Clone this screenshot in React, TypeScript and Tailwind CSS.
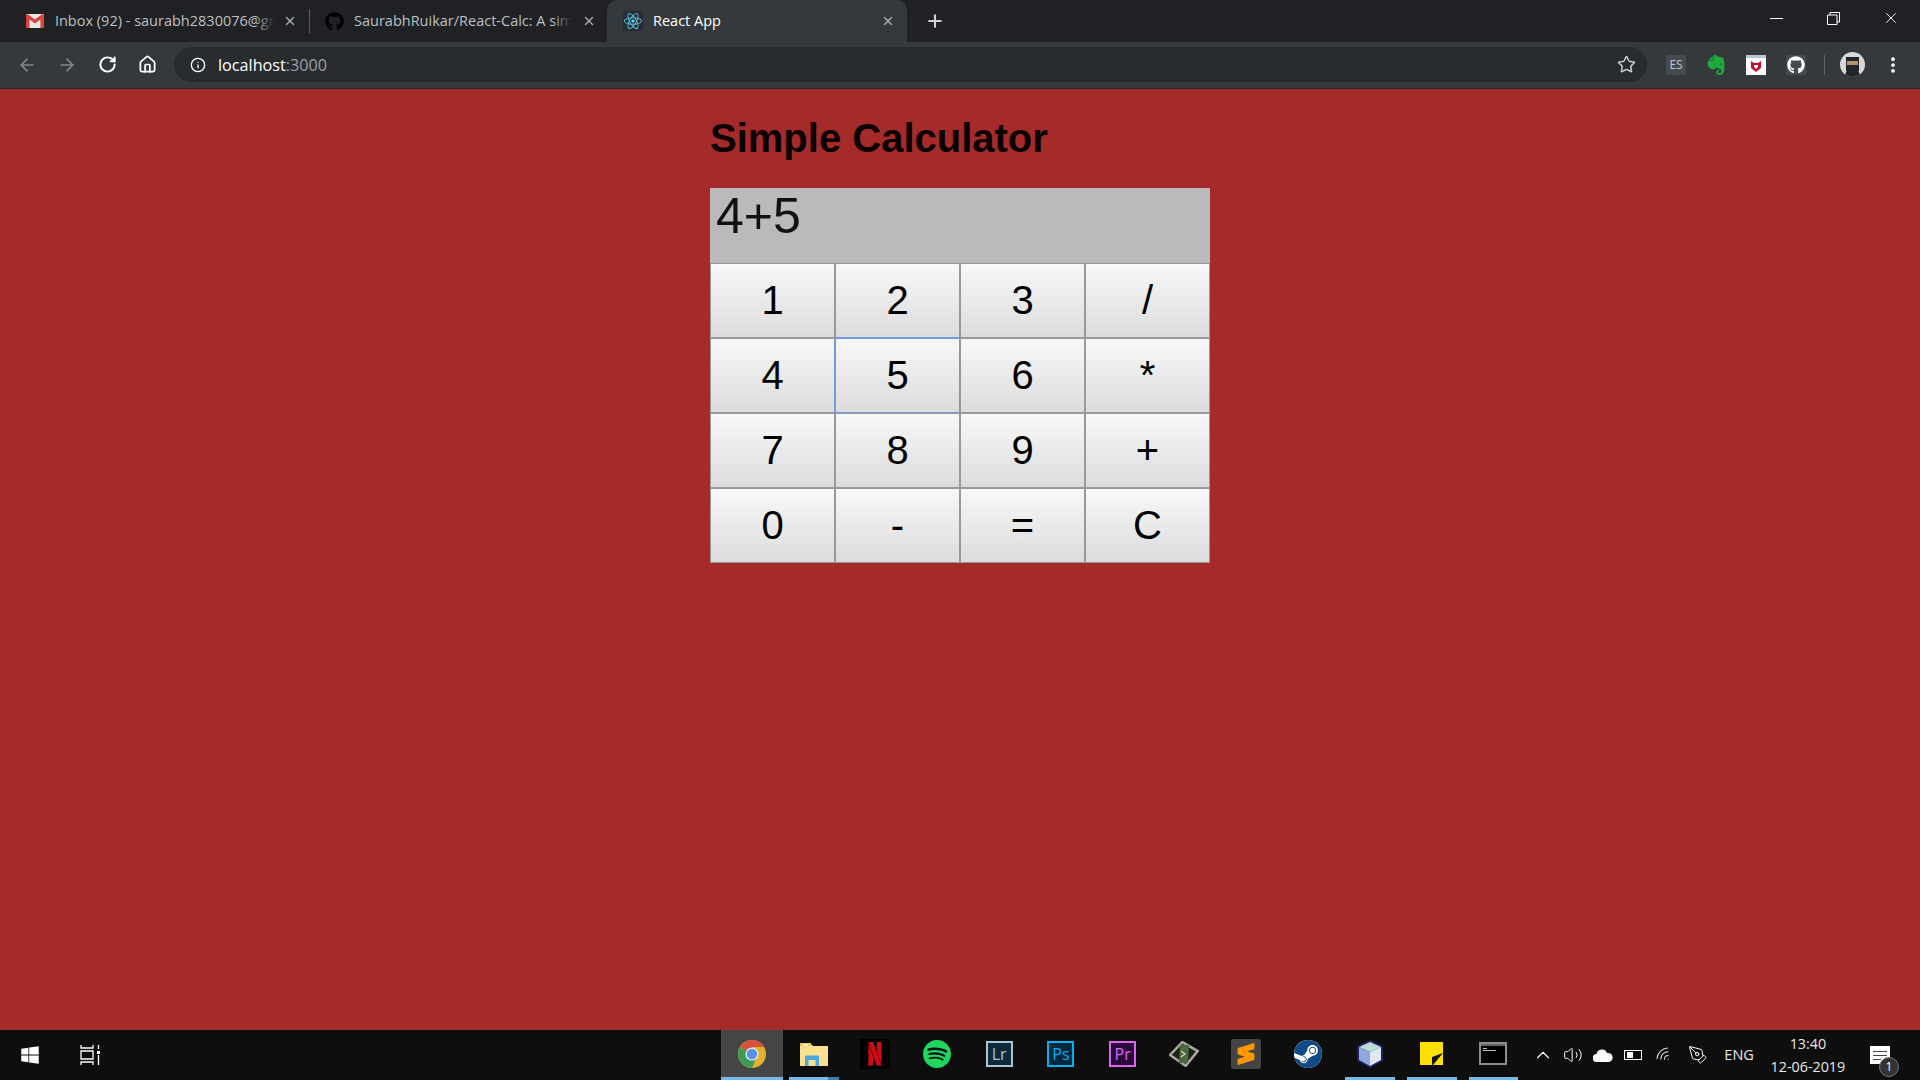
import React from 'react';
import { ArrowLeft, ArrowRight, RotateCw, Home, Info, Star, X, Plus, EllipsisVertical, ChevronUp, Volume2, Wifi, PenTool } from 'lucide-react';
import { FaGithub, FaReact, FaWindows } from 'react-icons/fa';
import { SiEvernote, SiNetflix, SiSpotify, SiSublimetext, SiSteam } from 'react-icons/si';

const keys = ['1', '2', '3', '/', '4', '5', '6', '*', '7', '8', '9', '+', '0', '-', '=', 'C'];

// the focused "5" key: its blue edge also takes over the touching edges of 2 and 4
const keyBorder = (key: string) => {
  if (key === '5') return 'border-[#6f9ade]';
  if (key === '2') return 'border-[#999999] border-b-[#6f9ade]';
  if (key === '4') return 'border-[#999999] border-r-[#6f9ade]';
  return 'border-[#999999]';
};

const GmailIcon = () => (
  <svg width="18" height="14" viewBox="0 0 18 14">
    <rect width="18" height="14" rx="1" fill="#e8e8e8" />
    <path d="M0 1.500V14h3.500V5.500L9 9.500l5.500-4V14H18V1.500C18 .4 16.800-.3 15.800.4L9 5.500 2.200.4C1.200-.3 0 .4 0 1.500z" fill="#d9423a" />
  </svg>
);

const ChromeIcon = () => (
  <svg width="28" height="28" viewBox="0 0 28 28">
    <circle cx="14" cy="14" r="14" fill="#e0b22e" />
    <path d="M14 14 1.900 7A14 14 0 0 1 26.100 7H14z" fill="#d6513f" />
    <path d="M14 14 1.900 7A14 14 0 0 0 14 28l6-14z" fill="#3e9a58" />
    <circle cx="14" cy="14" r="6.600" fill="#e8e8e8" />
    <circle cx="14" cy="14" r="5.200" fill="#5a8fe6" />
  </svg>
);

const FolderIcon = () => (
  <svg width="28" height="24" viewBox="0 0 28 24">
    <path d="M0 1h10l3 3h15v20H0z" fill="#fbe08f" />
    <path d="M0 1h11v3H0z" fill="#f2c94f" />
    <path d="M3 2h5v1.500H3z" fill="#fff" />
    <path d="M5 24v-9c0-1 .5-1.500 1.500-1.500h11c1 0 1.500.5 1.500 1.500v9h-3.500v-6h-7v6z" fill="#4aa8e0" />
  </svg>
);

const AdobeIcon = ({ label, border, bg, color }: { label: string; border: string; bg: string; color: string }) => (
  <div className={`flex h-[26px] w-[27px] items-center justify-center border-2 font-['Open_Sans',sans-serif] text-[16px] leading-none ${border} ${bg} ${color}`}>
    {label}
  </div>
);

const GpuIcon = () => (
  <svg width="30" height="26" viewBox="0 0 30 26">
    <path d="M15 1 29 12 15 25 1 12z" transform="rotate(-8 15 13)" fill="#1c2418" stroke="#a8a8a0" strokeWidth="2.500" />
    <path d="M11 4h9l-1 18h-9z" fill="#4b6b3c" />
    <path d="M12 10l4 3-4 3" fill="none" stroke="#d8dcc8" strokeWidth="1.200" />
  </svg>
);

const BoxIcon = () => (
  <svg width="28" height="28" viewBox="0 0 28 28">
    <path d="M14 0 27 6v15L14 28 1 21V6z" fill="#1a2360" />
    <path d="M14 2 25 7l-11 5L3 7z" fill="#bcdcd6" />
    <path d="M3 7l11 5v14L3 20z" fill="#8fa9e0" />
    <path d="M25 7 14 12v14l11-6z" fill="#dfe8ee" />
  </svg>
);

const StickyIcon = () => (
  <svg width="23" height="23" viewBox="0 0 23 23">
    <rect width="23" height="23" fill="#ffe000" />
    <path d="M12 15 23 11 13 23h-1z" fill="#111" />
  </svg>
);

const CmdIcon = () => (
  <div className="flex h-[23px] w-[28px] flex-col border-2 border-[#8d8d8d] bg-black">
    <div className="h-[2px] bg-[#666]" />
    <div className="ml-[2px] mt-[2px] h-[1px] w-[4px] bg-[#bbb]" />
    <div className="ml-[2px] mt-[1px] h-[1px] w-[13px] bg-[#bbb]" />
  </div>
);

const taskbarApps: { key: string; icon: React.ReactNode; open?: boolean; active?: boolean; stacked?: boolean }[] = [
  { key: 'chrome', icon: <ChromeIcon />, open: true, active: true },
  { key: 'files', icon: <FolderIcon />, open: true, stacked: true },
  { key: 'netflix', icon: <div className="flex h-[30px] w-[30px] items-center justify-center bg-black"><SiNetflix className="h-[24px] w-[24px] text-[#d40a12]" /></div> },
  { key: 'spotify', icon: <SiSpotify className="h-[28px] w-[28px] text-[#1ed760]" /> },
  { key: 'lr', icon: <AdobeIcon label="Lr" border="border-[#a8c4d8]" bg="bg-[#0e2a3a]" color="text-[#a8c4d8]" /> },
  { key: 'ps', icon: <AdobeIcon label="Ps" border="border-[#00b4f0]" bg="bg-[#02263c]" color="text-[#00b4f0]" /> },
  { key: 'pr', icon: <AdobeIcon label="Pr" border="border-[#d868f0]" bg="bg-[#2a0a3c]" color="text-[#d868f0]" /> },
  { key: 'gpu', icon: <GpuIcon /> },
  { key: 'sublime', icon: <div className="flex h-[30px] w-[30px] items-center justify-center rounded-[2px] bg-[#444]"><SiSublimetext className="h-[22px] w-[22px] text-[#ff9800]" /></div> },
  { key: 'steam', icon: <div className="rounded-full bg-white"><SiSteam className="h-[28px] w-[28px] text-[#114a82]" /></div> },
  { key: 'box', icon: <BoxIcon />, open: true },
  { key: 'sticky', icon: <StickyIcon />, open: true },
  { key: 'cmd', icon: <CmdIcon />, open: true },
];

const TabClose = () => <X className="h-[14px] w-[14px] shrink-0 text-[#a8abae]" strokeWidth={2.500} />;

const App: React.FC = () => {
  return (
    <div className="flex h-screen w-full flex-col overflow-hidden bg-[#a52a2a] font-['Liberation_Sans',sans-serif]">
      {/* tab strip */}
      <div className="flex h-[42px] items-start bg-[#202124] font-['Open_Sans',sans-serif] text-[14.5px] text-[#bdc0c3]">
        <div className="flex h-[42px] w-[309px] items-center pl-[26px] pr-[12px]">
          <GmailIcon />
          <span className="relative ml-[11px] w-[221px] overflow-hidden whitespace-nowrap">
            Inbox (92) - saurabh2830076@gmail.com
            <span className="absolute inset-y-0 right-0 w-[20px] bg-gradient-to-r from-transparent to-[#202124]" />
          </span>
          <span className="ml-[8px]"><TabClose /></span>
        </div>
        <div className="h-[24px] w-px self-center bg-[#5f6368]" />
        <div className="flex h-[42px] w-[297px] items-center pl-[15px]">
          <FaGithub className="h-[19px] w-[19px] text-black" />
          <span className="relative ml-[10px] w-[218px] overflow-hidden whitespace-nowrap">
            SaurabhRuikar/React-Calc: A simple calculator
            <span className="absolute inset-y-0 right-0 w-[20px] bg-gradient-to-r from-transparent to-[#202124]" />
          </span>
          <span className="ml-[10px]"><TabClose /></span>
        </div>
        <div className="flex h-[42px] w-[300px] items-center rounded-t-[10px] bg-[#35393c] pl-[16px] text-white">
          <span className="flex h-[20px] w-[20px] items-center justify-center rounded-[2px] bg-[#282c34]">
            <FaReact className="h-[18px] w-[18px] text-[#61dafb]" />
          </span>
          <span className="ml-[10px] w-[228px]">React App</span>
          <TabClose />
        </div>
        <Plus className="ml-[18px] mt-[11px] h-[20px] w-[20px] text-[#d0d2d4]" strokeWidth={2.500} />
        <div className="ml-auto flex h-[36px] items-center">
          <div className="mr-[44px] h-px w-[13px] bg-white" />
          <svg className="mr-[42px]" width="13" height="13" viewBox="0 0 13 13" fill="none" stroke="white">
            <path d="M.5 3h9.500v9.500H.5zM3 3V.5h9.500V10H10" />
          </svg>
          <X className="mr-[20px] h-[18px] w-[18px] text-white" strokeWidth={1.200} />
        </div>
      </div>

      {/* toolbar */}
      <div className="flex h-[47px] items-center border-b border-[#24272a] bg-[#35393c] pb-[1px]">
        <ArrowLeft className="ml-[17px] h-[20px] w-[20px] text-[#85888b]" strokeWidth={2} />
        <ArrowRight className="ml-[20px] h-[20px] w-[20px] text-[#85888b]" strokeWidth={2} />
        <RotateCw className="ml-[21px] h-[19px] w-[19px] text-white" strokeWidth={2.500} />
        <Home className="ml-[21px] h-[19px] w-[19px] text-white" strokeWidth={2.200} />
        <div className="ml-[17px] flex h-[35px] w-[1473px] items-center rounded-full bg-[#292c2f] pl-[16px]">
          <Info className="h-[16px] w-[16px] text-white" strokeWidth={2} />
          <span className="ml-[12px] pt-[1px] font-['Open_Sans',sans-serif] text-[16.2px] text-white">
            localhost<span className="text-[#9aa0a6]">:3000</span>
          </span>
          <Star className="ml-auto mr-[11px] h-[19px] w-[19px] text-[#c4c7c9]" strokeWidth={2} />
        </div>
        <div className="ml-[19px] flex h-[20px] w-[20px] items-center justify-center bg-[#484b4e] font-['Open_Sans',sans-serif] text-[12px] text-[#c4c7c9]">ES</div>
        <SiEvernote className="ml-[20px] h-[20px] w-[20px] text-[#1fa83c]" />
        <div className="ml-[20px] flex h-[20px] w-[20px] items-center justify-center border-t-[3px] border-t-[#b7c6d6] bg-white">
          <svg width="12" height="12" viewBox="0 0 12 12"><path d="M1 1l3 2h4l3-2v7l-5 4-5-4z" fill="#c8102e" /><path d="M4 5h4v2L6 9 4 7z" fill="#fff" /></svg>
        </div>
        <div className="ml-[20px] flex h-[20px] w-[20px] items-center justify-center bg-[#484b4e]">
          <FaGithub className="h-[18px] w-[18px] text-white" />
        </div>
        <div className="ml-[18px] h-[20px] w-px bg-[#5f6368]" />
        <div className="ml-[15px] flex h-[25px] w-[25px] items-center justify-center overflow-hidden rounded-full bg-[#d8d8d8]">
          <svg width="25" height="25" viewBox="0 0 25 25">
            <path d="M6 5h13v14H6zM4 25l3-7h11l3 7z" fill="#23272b" />
            <path d="M7 9h11v4H7z" fill="#b8926c" />
          </svg>
        </div>
        <EllipsisVertical className="ml-[18px] h-[20px] w-[20px] text-white" strokeWidth={2.500} />
      </div>

      {/* page */}
      <main className="flex-1">
        <div className="mx-auto w-[500px]">
          <h1 className="mb-[27px] mt-[26px] text-[40px] font-bold leading-[46px] text-[#0a0000]">Simple Calculator</h1>
          <div className="h-[75px] bg-[#bababa] pl-[6px] text-[50px] leading-[56px] text-[#111]">4+5</div>
          <div className="grid grid-cols-4">
            {keys.map((key) => (
              <button
                key={key}
                className={`flex h-[75px] items-center justify-center border bg-gradient-to-b from-[#f8f8f8] to-[#dcdcdc] pb-[2px] text-[40px] text-black ${keyBorder(key)}`}
              >
                {key}
              </button>
            ))}
          </div>
        </div>
      </main>

      {/* taskbar */}
      <div className="flex h-[50px] items-center bg-[#0e0e0e] text-white">
        <FaWindows className="ml-[20px] h-[20px] w-[20px] text-white" />
        <svg className="ml-[40px]" width="20" height="20" viewBox="0 0 20 20" fill="none" stroke="white" strokeWidth="1.300">
          <path d="M1 0v3h12V0M1 6h12v8H1zM1 20v-3h12v3M18.500 0v4M18.500 10v10" />
          <rect x="17" y="6" width="3" height="3" fill="white" stroke="none" />
        </svg>
        <div className="ml-[621px] flex h-full">
          {taskbarApps.map((app) => (
            <div key={app.key} className={`flex h-full w-[61.8px] flex-col ${app.active ? 'bg-[#454545]' : ''}`}>
              <div className="flex flex-1 items-center justify-center">{app.icon}</div>
              <div className={`flex h-[3px] ${app.active ? '' : 'mx-[6px]'} ${app.open ? 'bg-[#76b9ed]' : ''}`}>
                {app.stacked && <div className="ml-auto w-[11px] bg-[#3f7fb0]" />}
              </div>
            </div>
          ))}
        </div>
        <div className="ml-[8px] flex items-center">
          <ChevronUp className="h-[22px] w-[22px] text-white" strokeWidth={1.200} />
          <Volume2 className="ml-[9px] h-[20px] w-[20px] text-white" strokeWidth={1.200} />
          <svg className="ml-[10px]" width="20" height="13" viewBox="0 0 20 13"><path d="M4 13a4 4 0 0 1-.5-8A5.500 5.500 0 0 1 14 4a4.500 4.500 0 0 1 2 9z" fill="white" /></svg>
          <div className="ml-[11px] h-[10px] w-[18px] border border-white">
            <div className="ml-[2px] mt-[1px] h-[6px] w-[6px] bg-white" />
          </div>
          <Wifi className="ml-[13px] h-[18px] w-[18px] -rotate-45 text-[#ddd]" strokeWidth={1.400} />
          <PenTool className="ml-[15px] h-[20px] w-[20px] text-white" strokeWidth={1.200} />
          <span className="ml-[16px] font-['Open_Sans',sans-serif] text-[14.5px] text-[#e8e8e8]">ENG</span>
        </div>
        <div className="ml-[14px] flex w-[80px] flex-col items-center font-['Open_Sans',sans-serif] text-[14.3px] leading-[23px] text-[#e8e8e8]">
          <span>13:40</span>
          <span>12-06-2019</span>
        </div>
        <div className="relative ml-[22px] h-[18px] w-[20px] bg-white">
          <div className="ml-[3px] mt-[5px] h-px w-[14px] bg-[#444]" />
          <div className="ml-[3px] mt-[3px] h-px w-[14px] bg-[#444]" />
          <div className="ml-[3px] mt-[3px] h-px w-[8px] bg-[#444]" />
          <div className="absolute -bottom-[13px] left-[9px] flex h-[20px] w-[20px] items-center justify-center rounded-full border border-[#777] bg-[#333] font-['Open_Sans',sans-serif] text-[12px] text-white">1</div>
        </div>
      </div>
    </div>
  );
};

export default App;
